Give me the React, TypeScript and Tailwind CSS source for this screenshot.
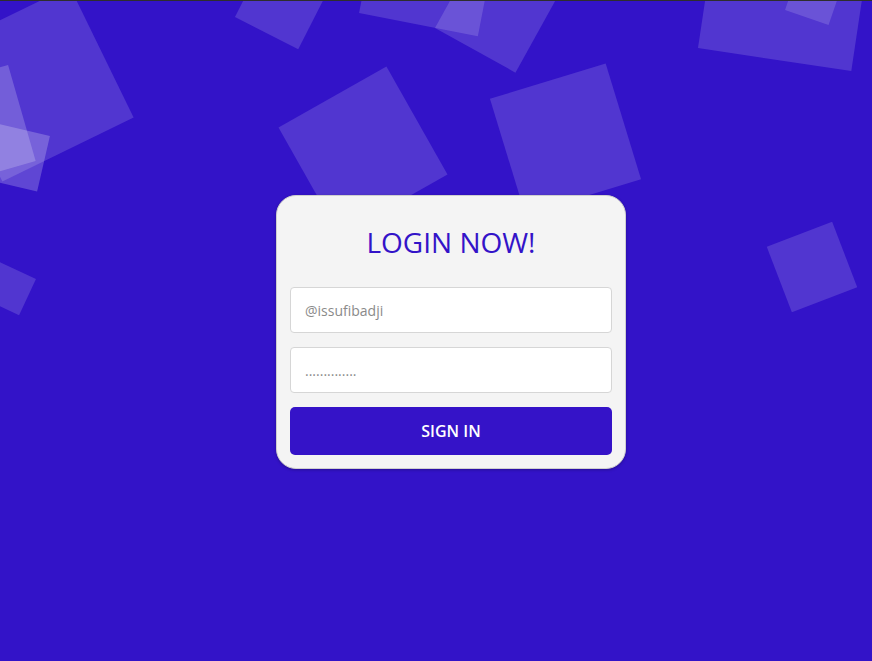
import React from "react";

const squares: { cx: number; cy: number; s: number; r: number; o: number }[] = [
  { cx: 36, cy: 84, s: 146, r: -26, o: 0.15 },
  { cx: -26.2, cy: 126.8, s: 100, r: -16, o: 0.2 },
  { cx: 15.75, cy: 157.25, s: 57, r: 13, o: 0.22 },
  { cx: 282.7, cy: 1.5, s: 71, r: 27, o: 0.15 },
  { cx: 430, cy: -34.8, s: 121, r: 11, o: 0.15 },
  { cx: 497.5, cy: 10.1, s: 92, r: 29, o: 0.15 },
  { cx: 786.1, cy: -17.1, s: 155, r: 8.5, o: 0.15 },
  { cx: 814.3, cy: -4.3, s: 46, r: 19, o: 0.15 },
  { cx: 363, cy: 151, s: 124, r: -29.5, o: 0.15 },
  { cx: 565.5, cy: 139, s: 121, r: -17, o: 0.15 },
  { cx: 812, cy: 267, s: 70, r: -21, o: 0.15 },
  { cx: 9.4, cy: 288.6, s: 40, r: 25, o: 0.15 },
];

export default function App() {
  return (
    <div
      className="relative h-screen w-full overflow-hidden bg-[#3313c8]"
      style={{ fontFamily: '"Open Sans", "Noto Sans", sans-serif' }}
    >
      <svg
        className="absolute inset-0 h-full w-full"
        viewBox="0 0 872 661"
        preserveAspectRatio="xMinYMin slice"
      >
        {squares.map((q, i) => (
          <rect
            key={i}
            x={q.cx - q.s / 2}
            y={q.cy - q.s / 2}
            width={q.s}
            height={q.s}
            fill="#ffffff"
            fillOpacity={q.o}
            transform={`rotate(${q.r} ${q.cx} ${q.cy})`}
          />
        ))}
      </svg>
      <div className="absolute left-0 right-0 top-0 h-px bg-[#2e2e2e]" />
      <div className="relative flex pl-[276px] pt-[195px]">
        <div className="w-[350px] rounded-[20px] border border-[#cfcfcf] bg-[#f4f4f4] p-[13px] shadow-[0_1px_3px_rgba(0,0,0,0.25)]">
          <h1 className="mt-[13px] mb-[25px] text-center text-[28px] leading-[40px] font-normal text-[#3313c8]">
            LOGIN NOW!
          </h1>
          <div className="flex flex-col gap-[14px]">
            <input
              type="text"
              placeholder="@issufibadji"
              className="h-[46px] w-full rounded-[4px] border border-[#d6d6d6] bg-white px-[14px] text-[14px] text-[#555] placeholder:text-[#8a8a8a] outline-none"
            />
            <input
              type="text"
              placeholder=".............."
              className="h-[46px] w-full rounded-[4px] border border-[#d6d6d6] bg-white px-[14px] text-[14px] text-[#555] placeholder:text-[#8a8a8a] outline-none"
            />
            <button className="h-[48px] w-full rounded-[5px] bg-[#3513c8] text-[16px] font-semibold text-white">
              SIGN IN
            </button>
          </div>
        </div>
      </div>
    </div>
  );
}
